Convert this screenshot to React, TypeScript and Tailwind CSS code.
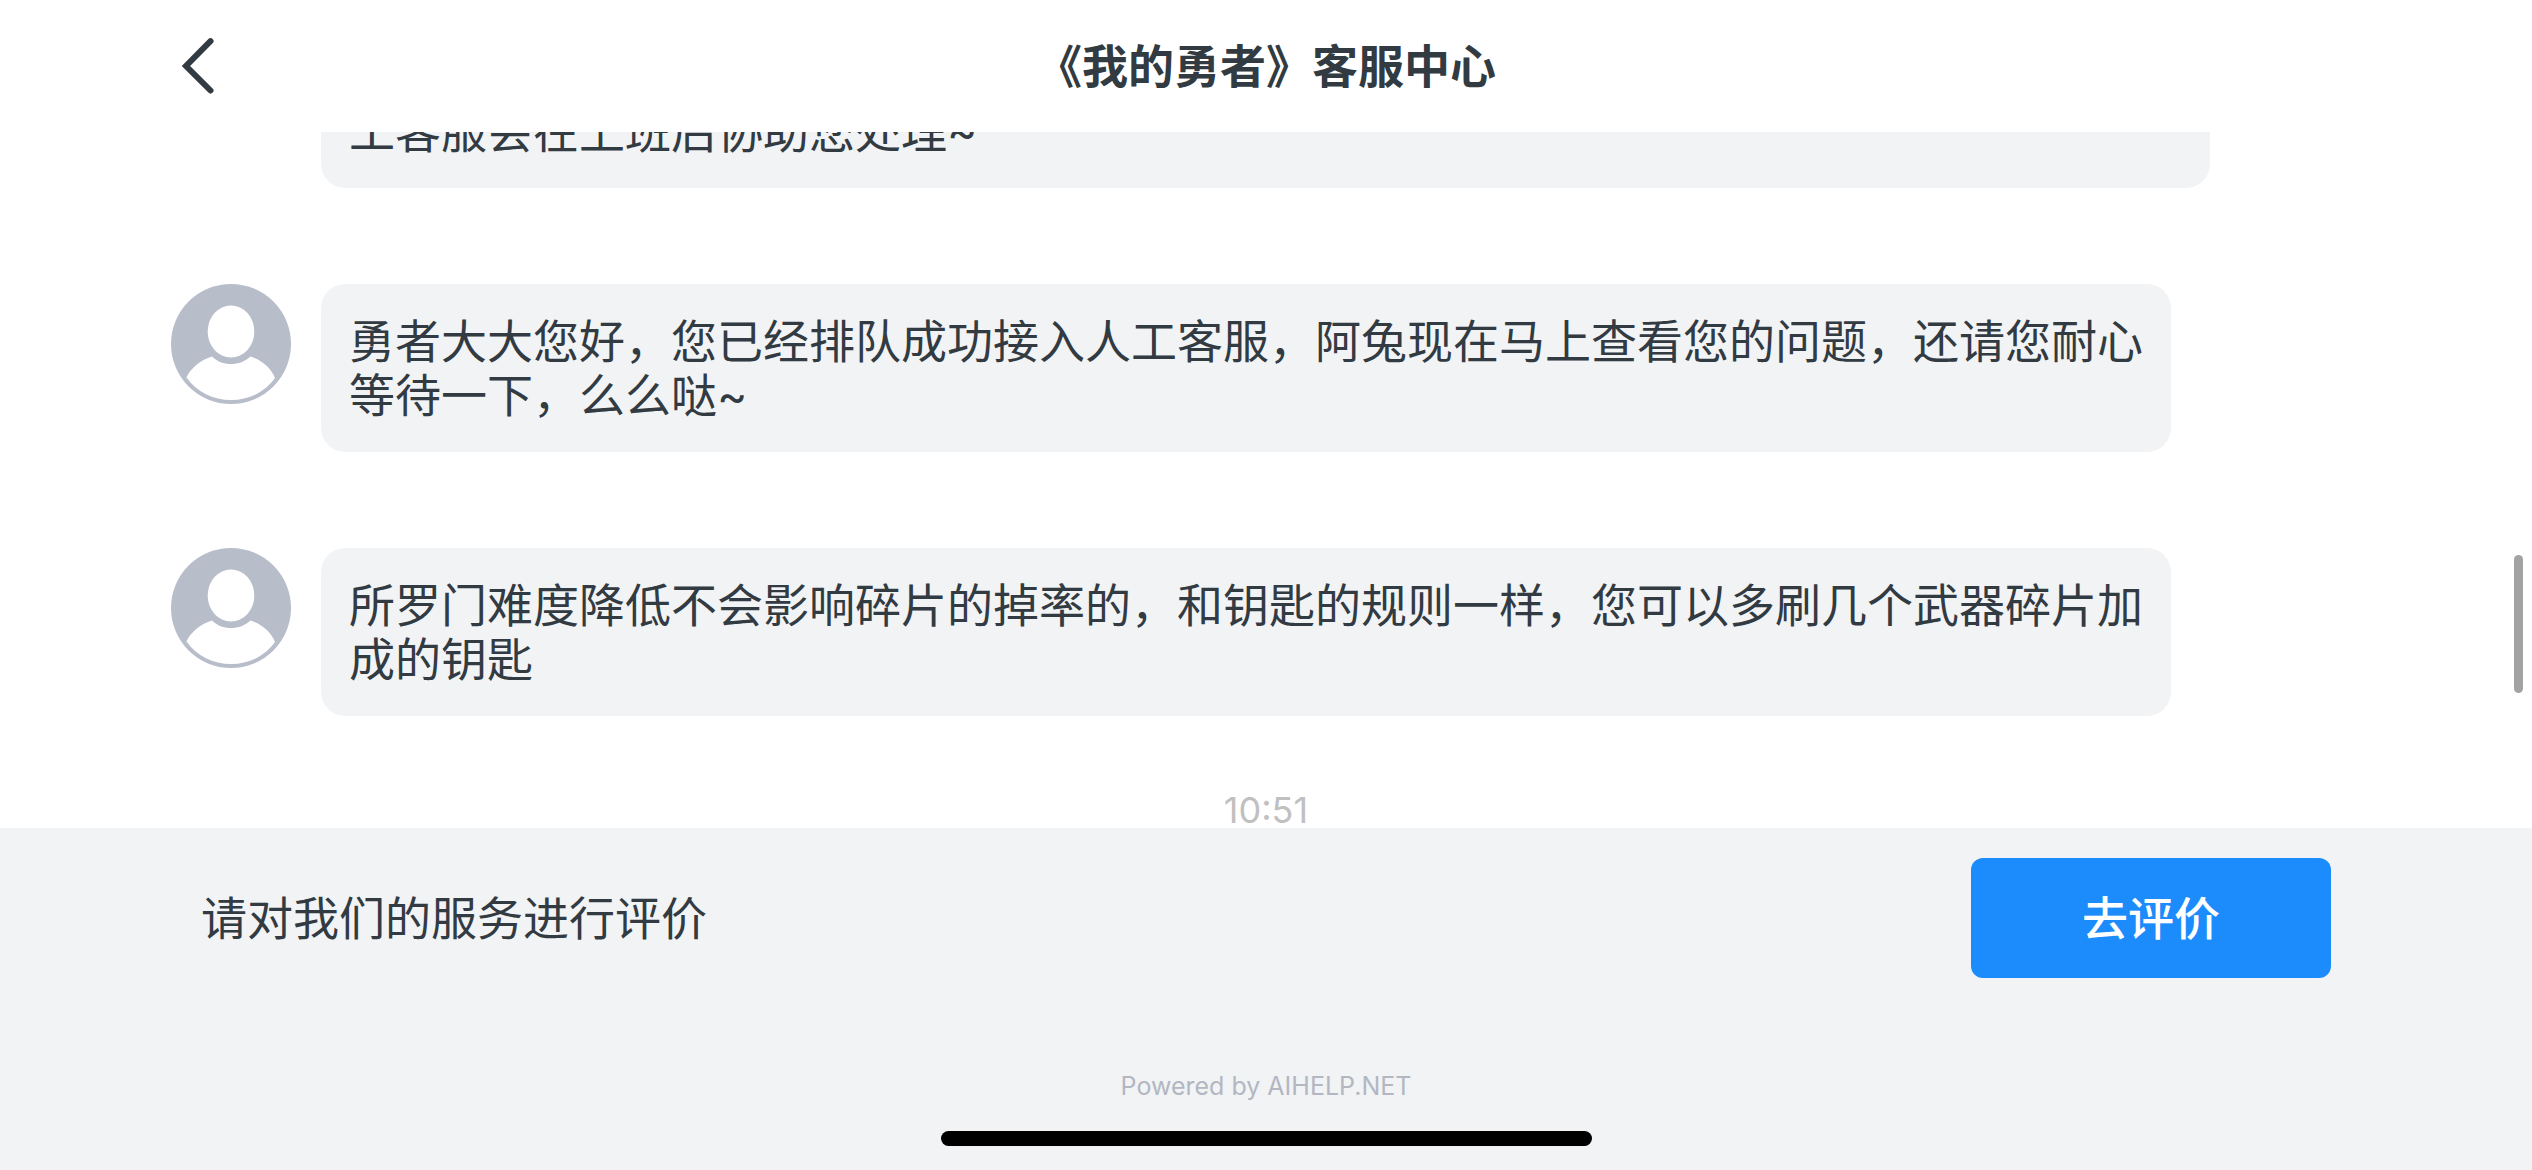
import { useState } from 'react';

interface Message {
  id: number;
  text: string;
  tall?: boolean;
}

const messages: Message[] = [
  { id: 1, text: '工客服会在上班后协助您处理~', tall: true },
  {
    id: 2,
    text: '勇者大大您好，您已经排队成功接入人工客服，阿兔现在马上查看您的问题，还请您耐心\n等待一下，么么哒~',
  },
  {
    id: 3,
    text: '所罗门难度降低不会影响碎片的掉率的，和钥匙的规则一样，您可以多刷几个武器碎片加\n成的钥匙',
  },
];

function BackIcon() {
  return (
    <svg className="h-[60px] w-[38px]" viewBox="0 0 38 60" fill="none" aria-hidden="true">
      <path d="M33.5 5.2 L9 30 L33.5 54.5" stroke="currentColor" strokeWidth="6" strokeLinecap="round" />
    </svg>
  );
}

function Avatar() {
  return (
    <svg className="h-[120px] w-[120px] shrink-0" viewBox="0 0 120 120" aria-hidden="true">
      <circle cx="60" cy="60" r="60" fill="#b8bec9" />
      <ellipse cx="60" cy="47.5" rx="23.3" ry="26" fill="#fff" />
      <path
        d="M41 72.5 C46 77.5 52.5 80 60 80 C67.5 80 74 77.5 79.5 72.5 C90 76 100 83.5 104 94 C94 108 78 116 60 116 C42 116 26 108 15.5 93.5 C20 83.5 30 76 41 72.5 Z"
        fill="#fff"
      />
    </svg>
  );
}

function MessageRow({ message }: { message: Message }) {
  return (
    <li className="flex shrink-0 items-start gap-[30px]">
      <Avatar />
      <p
        className={
          message.tall
            ? 'flex min-h-[276px] w-full max-w-[1889px] items-end rounded-[24px] bg-[#f1f3f5] px-7 py-[30px]'
            : 'w-fit whitespace-pre-line rounded-[24px] bg-[#f1f3f5] px-7 py-[30px]'
        }
      >
        {message.text}
      </p>
    </li>
  );
}

export default function App() {
  const [rating, setRating] = useState(false);

  return (
    <div className="flex h-screen flex-col bg-white font-['Inter','Noto_Sans_CJK_SC',sans-serif] text-[46px] leading-[54px] text-[#323a42]">
      {/* Title bar */}
      <header className="grid h-[132px] shrink-0 grid-cols-[1fr_auto_1fr] items-center px-[177px]">
        <button type="button" aria-label="返回" className="w-fit">
          <BackIcon />
        </button>
        <h1 className="font-bold">《我的勇者》客服中心</h1>
      </header>

      {/* Conversation, pinned to the newest message */}
      <main className="relative flex min-h-0 flex-1 flex-col justify-end overflow-hidden px-[171px]">
        <ul className="flex flex-col gap-24">
          {messages.map((message) => (
            <MessageRow key={message.id} message={message} />
          ))}
        </ul>
        <time className="mt-[76px] text-center text-4xl leading-9 text-[#c0c0c0]">10:51</time>
        <div className="absolute right-[9px] top-[423px] h-[138px] w-[9px] rounded-full bg-[#a3a3a3]" />
      </main>

      {/* Rating prompt */}
      <footer className="flex shrink-0 flex-col items-center bg-[#f1f3f5] pt-[30px] pb-6">
        <div className="flex w-full items-center justify-between px-[201px]">
          <p>请对我们的服务进行评价</p>
          <button
            type="button"
            aria-pressed={rating}
            onClick={() => setRating(true)}
            className="h-[120px] w-[360px] rounded-xl bg-[#1c8bfc] font-medium text-white"
          >
            去评价
          </button>
        </div>
        <p className="mt-[92px] text-[25px] leading-8 text-[#b2b7c2]">Powered by AIHELP.NET</p>
        <div className="mt-[29px] h-[15px] w-[651px] rounded-full bg-black" />
      </footer>
    </div>
  );
}
